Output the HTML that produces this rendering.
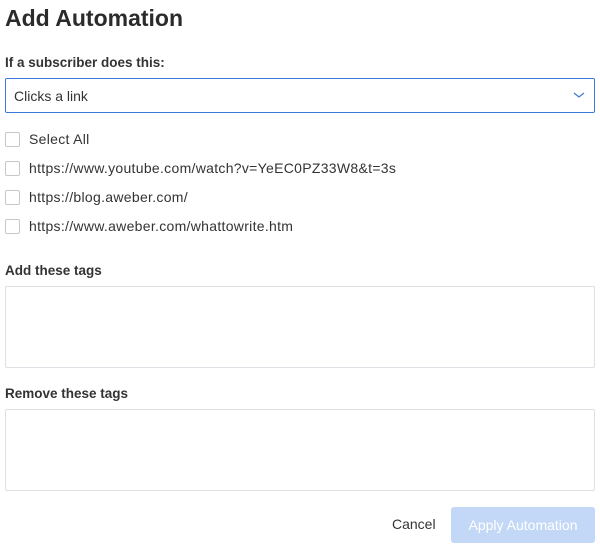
<!DOCTYPE html>
<html><head><style>
body{margin:0;width:600px;height:553px;background:#fff;font-family:"Liberation Sans",sans-serif;color:#333;position:relative;overflow:hidden}
.a{position:absolute}
h1{position:absolute;left:5px;top:5px;margin:0;font-size:23px;font-weight:bold;color:#2b2b2b}
.lbl{font-size:13.5px;font-weight:bold;color:#333}
.sel{left:5px;top:78px;width:588px;height:33px;border:1px solid #3b78d8;border-radius:2px}
.sel span{position:absolute;left:8px;top:9px;font-size:14px;color:#333}
.cb{left:5px;width:13px;height:13px;border:1px solid #c4c7cc;border-radius:2px}
.ct{left:29px;font-size:14px;color:#333;letter-spacing:0.3px}
.ta{left:5px;width:588px;height:80px;border:1px solid #dcdfe3;border-radius:2px}
</style></head><body>
<h1>Add Automation</h1>
<div class="a lbl" style="left:5px;top:55px">If a subscriber does this:</div>
<div class="a sel"><span>Clicks a link</span>
<svg class="a" style="left:567px;top:11px" width="12" height="10" viewBox="0 0 12 10"><path d="M1 3l5 4 5-4" fill="none" stroke="#3b78d8" stroke-width="1.2"/></svg></div>
<div class="a cb" style="top:132px"></div><div class="a ct" style="top:131px">Select All</div>
<div class="a cb" style="top:161px"></div><div class="a ct" style="top:160px">https://www.youtube.com/watch?v=YeEC0PZ33W8&amp;t=3s</div>
<div class="a cb" style="top:190px"></div><div class="a ct" style="top:189px">https://blog.aweber.com/</div>
<div class="a cb" style="top:219px"></div><div class="a ct" style="top:218px">https://www.aweber.com/whattowrite.htm</div>
<div class="a lbl" style="left:5px;top:263px">Add these tags</div>
<div class="a ta" style="top:286px"></div>
<div class="a lbl" style="left:5px;top:386px">Remove these tags</div>
<div class="a ta" style="top:409px"></div>
<div class="a" style="left:392px;top:516px;font-size:14px;color:#333">Cancel</div>
<div class="a" style="left:451px;top:507px;width:144px;height:36px;background:#c3d8f7;border-radius:3px;color:#fff;font-size:14px;text-align:center;line-height:36px">Apply Automation</div>
</body></html>
